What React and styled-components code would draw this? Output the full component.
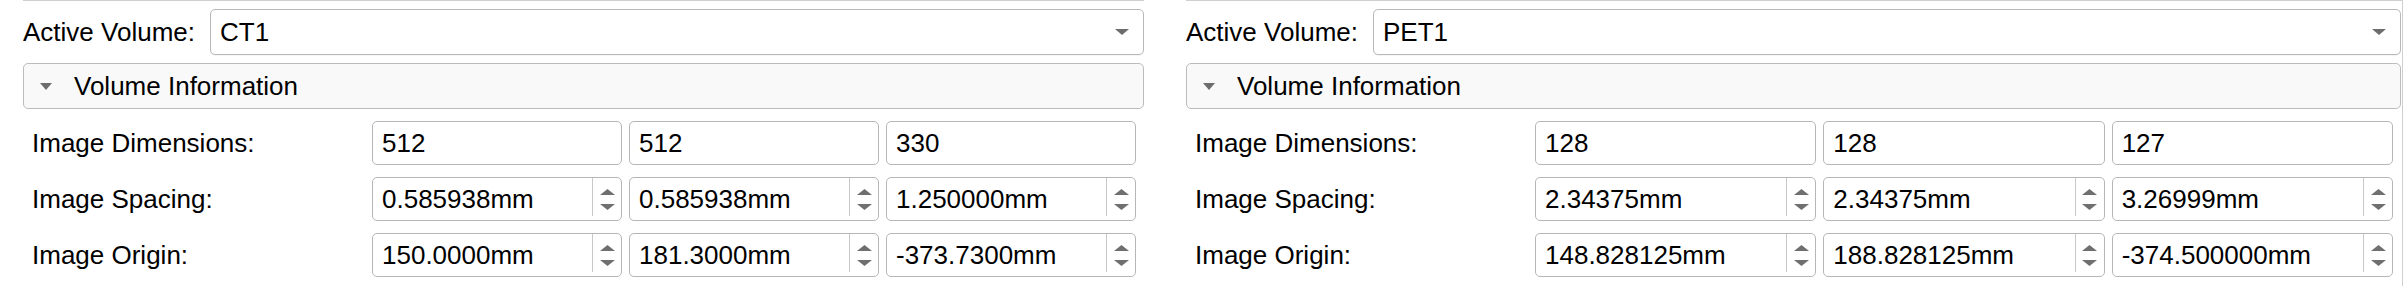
import React from 'react';
import styled, { createGlobalStyle } from 'styled-components';

const GlobalStyle = createGlobalStyle`
  html, body {
    margin: 0;
    padding: 0;
    background: #ffffff;
  }
  body {
    font-family: "Liberation Sans", Arial, sans-serif;
    font-size: 26px;
    color: #000;
  }
`;

const Page = styled.div`
  display: flex;
  gap: 42px;
  padding-left: 23px;
  height: 286px;
  box-sizing: border-box;
`;

const Panel = styled.div`
  width: ${p => p.width}px;
  border-top: 1px solid #cfcfcf;
  border-right: ${p => (p.edge ? '1px solid #cfcfcf' : 'none')};
  padding-right: ${p => (p.edge ? '1px' : '0')};
  padding-top: 8px;
  box-sizing: content-box;
  display: flex;
  flex-direction: column;
`;

const VolumeRow = styled.div`
  display: flex;
  align-items: center;
  gap: 15px;
`;

const Label = styled.span`
  white-space: nowrap;
  line-height: 1;
`;

const Combo = styled.div`
  flex: 1;
  height: 46px;
  box-sizing: border-box;
  border: 1px solid #b8b8b8;
  border-radius: 5px;
  background: #fff;
  display: flex;
  align-items: center;
  padding: 0 14px 0 9px;
  box-shadow: 0 1px 0 rgba(0, 0, 0, 0.04);
`;

const ComboText = styled.span`
  flex: 1;
`;

const Section = styled.div`
  margin-top: 8px;
  height: 46px;
  box-sizing: border-box;
  border: 1px solid #bcbcbc;
  border-radius: 5px;
  background: #f9f9f9;
  display: flex;
  align-items: center;
  padding-left: 16px;
  gap: 22px;
`;

const Grid = styled.div`
  margin-top: 12px;
  padding: 0 8px 0 9px;
  display: grid;
  grid-template-columns: 333px 1fr 1fr 1fr;
  grid-auto-rows: 44px;
  column-gap: 7px;
  row-gap: 12px;
  align-items: center;
`;

const RowLabel = styled.span`
  white-space: nowrap;
`;

const Field = styled.div`
  height: 44px;
  box-sizing: border-box;
  border: 1px solid #b6b6b6;
  border-radius: 5px;
  background: #fff;
  display: flex;
  align-items: stretch;
  overflow: hidden;
`;

const FieldText = styled.span`
  flex: 1;
  display: flex;
  align-items: center;
  padding-left: 9px;
  white-space: nowrap;
`;

const Spinner = styled.div`
  width: 28px;
  margin: 0 0 4px;
  border-left: 1px solid #c9c9c9;
  display: flex;
  align-items: center;
  justify-content: center;
  padding-top: 4px;
`;

const DownArrow = ({ w = 14, h = 6 }) => (
  <svg width={w} height={h} viewBox={`0 0 ${w} ${h}`}>
    <polygon points={`0,0 ${w},0 ${w / 2},${h}`} fill="#6d6d6d" />
  </svg>
);

const Steppers = () => (
  <svg width="15" height="21" viewBox="0 0 15 21">
    <polygon points="0,6 7.5,0 15,6" fill="#6f6f6f" />
    <polygon points="0,15 15,15 7.5,21" fill="#6f6f6f" />
  </svg>
);

const NumberField = ({ value, spin }) => (
  <Field>
    <FieldText>{value}</FieldText>
    {spin && (
      <Spinner>
        <Steppers />
      </Spinner>
    )}
  </Field>
);

const VolumePanel = ({ width, edge, volume, dims, spacing, origin }) => (
  <Panel width={width} edge={edge}>
    <VolumeRow>
      <Label>Active Volume:</Label>
      <Combo>
        <ComboText>{volume}</ComboText>
        <DownArrow />
      </Combo>
    </VolumeRow>
    <Section>
      <DownArrow w={12} h={7} />
      <span>Volume Information</span>
    </Section>
    <Grid>
      <RowLabel>Image Dimensions:</RowLabel>
      {dims.map((v, i) => <NumberField key={i} value={v} />)}
      <RowLabel>Image Spacing:</RowLabel>
      {spacing.map((v, i) => <NumberField key={i} value={v} spin />)}
      <RowLabel>Image Origin:</RowLabel>
      {origin.map((v, i) => <NumberField key={i} value={v} spin />)}
    </Grid>
  </Panel>
);

const App = () => {
  return (
    <>
      <GlobalStyle />
      <Page>
        <VolumePanel
          width={1121}
          volume="CT1"
          dims={['512', '512', '330']}
          spacing={['0.585938mm', '0.585938mm', '1.250000mm']}
          origin={['150.0000mm', '181.3000mm', '-373.7300mm']}
        />
        <VolumePanel
          width={1215}
          edge
          volume="PET1"
          dims={['128', '128', '127']}
          spacing={['2.34375mm', '2.34375mm', '3.26999mm']}
          origin={['148.828125mm', '188.828125mm', '-374.500000mm']}
        />
      </Page>
    </>
  );
};

export default App;
